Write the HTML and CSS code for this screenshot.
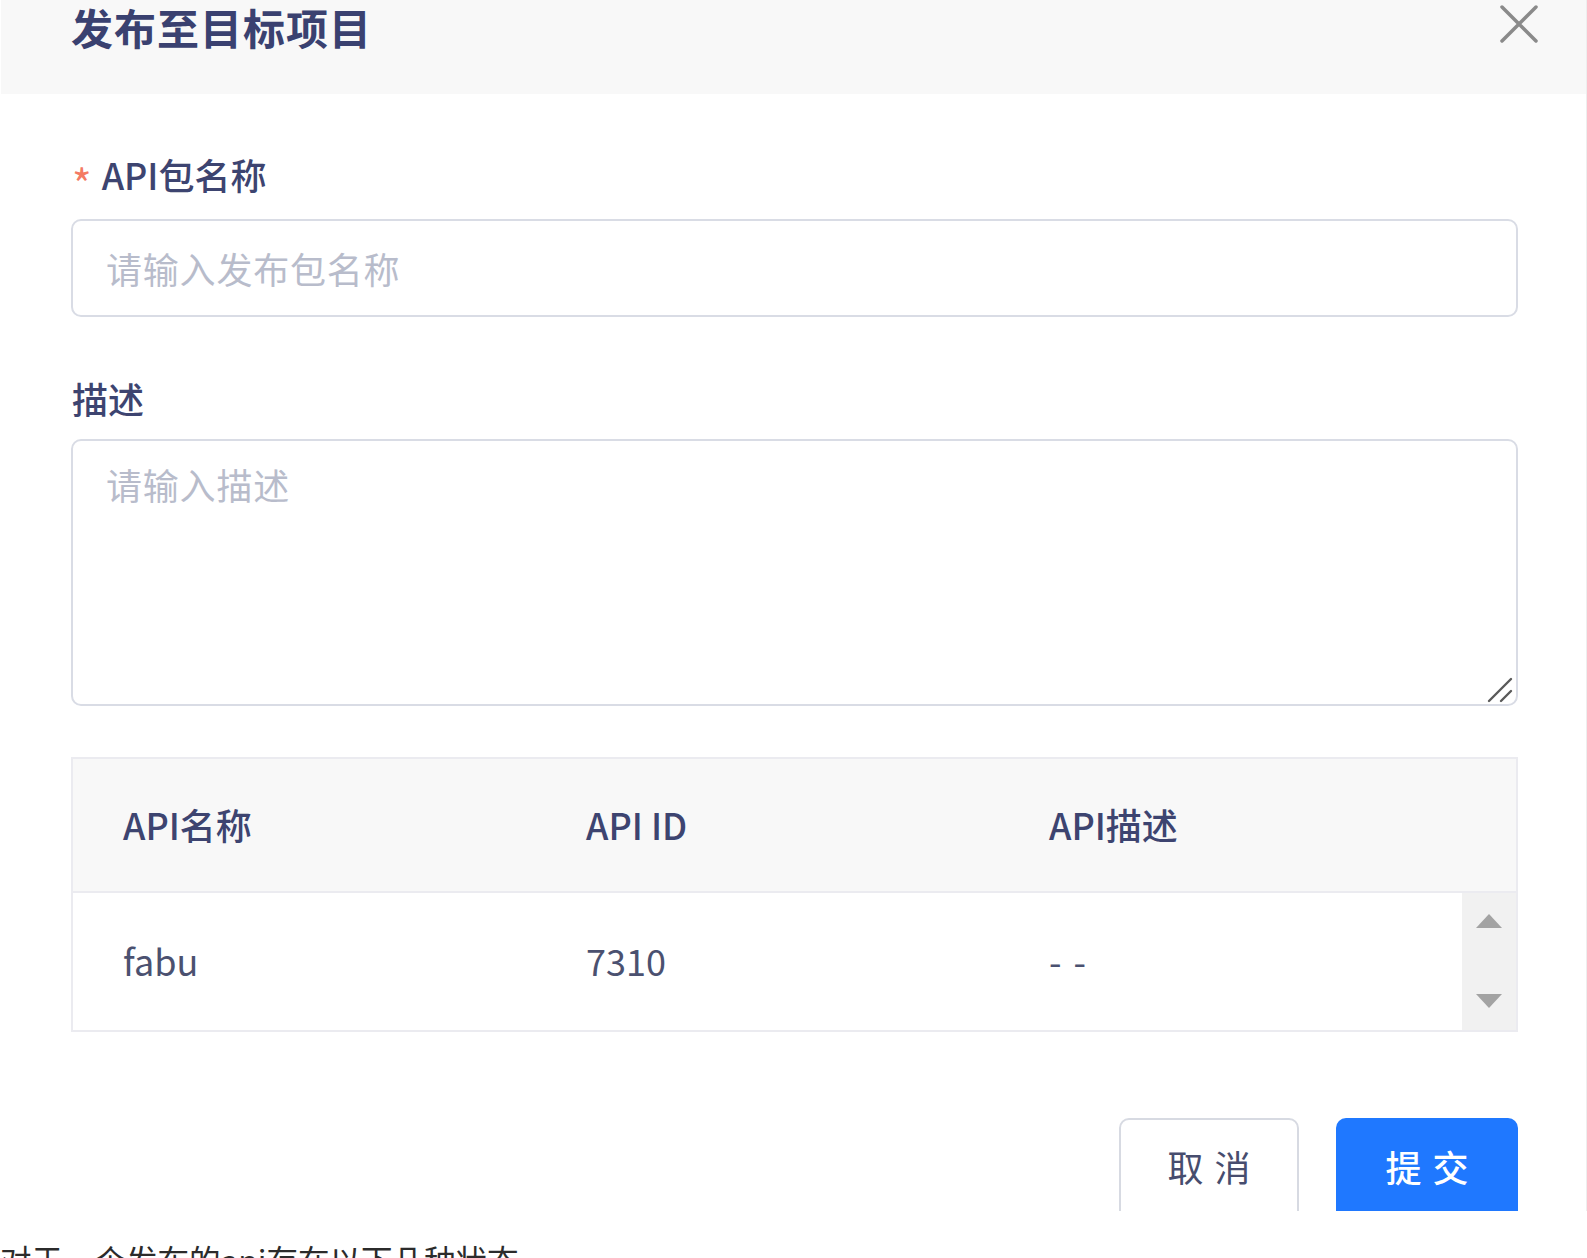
FILE: index.html
```html
<!DOCTYPE html>
<html lang="zh-CN">
<head>
<meta charset="utf-8">
<title>发布至目标项目</title>
<link rel="stylesheet" href="styles.css">
</head>
<body>
<div class="dialog">
  <div class="dialog-header">
    <h2 class="dialog-title">发布至目标项目</h2>
    <svg class="close-icon" width="38" height="38" viewBox="0 0 38 38" aria-label="关闭">
      <path d="M2 2 L36 36 M36 2 L2 36" stroke="#8a8a8a" stroke-width="3.5" stroke-linecap="round" fill="none"/>
    </svg>
  </div>
  <div class="dialog-body">
    <div class="form-item">
      <label class="form-label"><span class="required">*</span>API包名称</label>
      <input class="text-input" type="text" placeholder="请输入发布包名称">
    </div>
    <div class="form-item second">
      <label class="form-label">描述</label>
      <div class="textarea-wrap">
        <textarea class="text-area" placeholder="请输入描述"></textarea>
        <svg class="resize-handle" width="26" height="26" viewBox="0 0 26 26">
          <path d="M2 24 L24 2 M14 24 L24 14" stroke="#5a5a5a" stroke-width="2.4" stroke-linecap="round" fill="none"/>
        </svg>
      </div>
    </div>
    <div class="api-table">
      <div class="thead">
        <div class="th">API名称</div>
        <div class="th">API ID</div>
        <div class="th">API描述</div>
        <div class="th gutter"></div>
      </div>
      <div class="tbody">
        <div class="td">fabu</div>
        <div class="td">7310</div>
        <div class="td dash">- -</div>
        <div class="scrollbar">
          <span class="arrow up"></span>
          <span class="arrow down"></span>
        </div>
      </div>
    </div>
    <div class="footer">
      <button class="btn btn-cancel">取消</button>
      <button class="btn btn-submit">提交</button>
    </div>
  </div>
</div>
<p class="page-text">对于一个发布的api存在以下几种状态</p>
</body>
</html>
```
FILE: styles.css
```css
* { box-sizing: border-box; }

html, body {
  margin: 0;
  padding: 0;
  background: #ffffff;
}

body {
  width: 1587px;
  height: 1258px;
  overflow: hidden;
  font-family: "Noto Sans CJK SC", "Noto Sans", sans-serif;
}

.dialog {
  height: 1211px;
  overflow: hidden;
  border-right: 1px solid #eeeeee;
  background: #ffffff;
}

.dialog-header {
  height: 94px;
  background: #f8f8f8;
  display: flex;
  justify-content: space-between;
  align-items: flex-start;
  padding: 0 48px 0 72px;
  margin-left: 1px;
}

.dialog-title {
  margin: 6px 0 0 -2px;
  font-size: 42px;
  line-height: 42px;
  font-weight: 700;
  color: #3a4170;
  letter-spacing: 1px;
}

.close-icon {
  margin-top: 5px;
  display: block;
}

.dialog-body {
  padding: 56px 68px 0 71px;
}

.form-label {
  display: block;
  font-size: 36px;
  line-height: 48px;
  font-weight: 500;
  color: #3d4470;
  margin-left: 1px;
}

.required {
  display: inline-block;
  color: #f47a63;
  font-weight: 400;
  font-size: 42px;
  line-height: 40px;
  vertical-align: -11px;
  margin-right: 10px;
}

.text-input {
  display: block;
  width: 100%;
  height: 98px;
  margin-top: 16px;
  border: 2px solid #d9dce5;
  border-radius: 10px;
  padding: 0 33px;
  font-family: inherit;
  font-size: 36px;
  letter-spacing: 0.8px;
  color: #3d4470;
  background: #ffffff;
  outline: none;
}

.form-item.second {
  margin-top: 57px;
}

.textarea-wrap {
  position: relative;
  margin-top: 17px;
}

.text-area {
  display: block;
  width: 100%;
  height: 267px;
  border: 2px solid #d9dce5;
  border-radius: 10px;
  padding: 16px 33px;
  font-family: inherit;
  font-size: 36px;
  line-height: 54px;
  letter-spacing: 0.8px;
  color: #3d4470;
  resize: none;
  outline: none;
  background: #ffffff;
}

.text-input::placeholder,
.text-area::placeholder {
  color: #b8bccb;
  opacity: 1;
}

.resize-handle {
  position: absolute;
  right: 5px;
  bottom: 3px;
}

.api-table {
  margin-top: 51px;
  border: 2px solid #ebebf0;
}

.thead {
  display: grid;
  grid-template-columns: 463px 463px 463px 1fr;
  height: 134px;
  background: #f8f8f8;
  border-bottom: 2px solid #ebebf0;
}

.th {
  display: flex;
  align-items: center;
  padding-left: 50px;
  padding-bottom: 3px;
  font-size: 36px;
  font-weight: 500;
  color: #3d4470;
}

.tbody {
  display: grid;
  grid-template-columns: 463px 463px 463px 1fr;
  height: 137px;
}

.td {
  display: flex;
  align-items: center;
  padding-left: 50px;
  padding-bottom: 4px;
  font-size: 36px;
  color: #4b5170;
}

.td.dash {
  letter-spacing: 2px;
}

.scrollbar {
  background: #f1f1f1;
  display: flex;
  flex-direction: column;
  justify-content: space-between;
  align-items: center;
  padding: 21px 0 22px;
}

.arrow {
  width: 0;
  height: 0;
  border-left: 13px solid transparent;
  border-right: 13px solid transparent;
}

.arrow.up {
  border-bottom: 14px solid #a3a3a3;
}

.arrow.down {
  border-top: 14px solid #a3a3a3;
}

.footer {
  display: flex;
  justify-content: flex-end;
  gap: 37px;
  margin-top: 86px;
}

.btn {
  height: 102px;
  border-radius: 10px;
  font-family: inherit;
  font-size: 36px;
  letter-spacing: 11px;
  padding: 0 0 6px 11px;
  cursor: pointer;
}

.btn-cancel {
  width: 180px;
  background: #ffffff;
  border: 2px solid #d7dae2;
  color: #474d6e;
}

.btn-submit {
  width: 182px;
  background: #1f78ff;
  border: none;
  color: #ffffff;
  font-weight: 500;
}

.page-text {
  margin: 28px 0 0 0;
  font-size: 31.5px;
  line-height: 40px;
  color: #2b2b2b;
}
```
